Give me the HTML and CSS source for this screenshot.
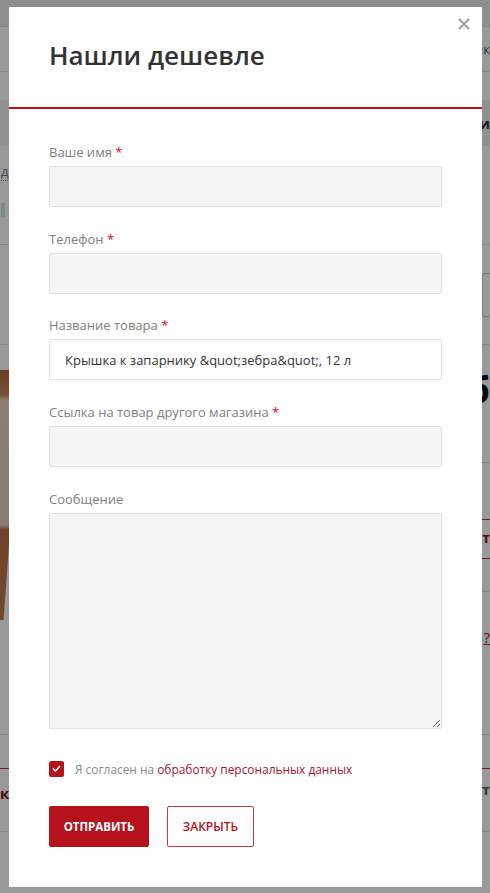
FILE: index.html
```html
<!DOCTYPE html>
<html lang="ru">
<head>
<meta charset="utf-8">
<title>Нашли дешевле</title>
<link rel="stylesheet" href="styles.css">
</head>
<body>
<div class="page">
  <div class="row r-top"></div>
  <div class="row r-nav"><span></span><span class="nav-txt">Банк</span></div>
  <div class="row r-gap"></div>
  <div class="row r-band"><span></span><span class="band-txt">Ви</span></div>
  <div class="row r-info">
    <div class="info-left"><span class="dotted">д</span><span class="teal"></span></div>
  </div>
  <div class="row r-box"><span></span><span class="peek-box"></span></div>
  <div class="row r-main">
    <div class="wood"></div>
    <div class="main-right">
      <div class="big">б</div>
      <div class="mr-line"></div>
      <div class="mr-red">т</div>
      <div class="mr-line2"></div>
      <div class="mr-q">?</div>
    </div>
  </div>
  <div class="row r-foot"><span class="foot-l">к</span><span class="foot-r">т</span></div>
  <div class="row r-last"></div>
</div>

<div class="overlay">
  <div class="modal">
    <button class="close" type="button" aria-label="Закрыть">
      <svg width="12" height="12" viewBox="0 0 12 12"><path d="M1 1 L11 11 M11 1 L1 11" stroke="#a3a3a3" stroke-width="2.4" stroke-linecap="butt"/></svg>
    </button>
    <div class="modal-head">
      <h2 class="title">Нашли дешевле</h2>
    </div>
    <form class="modal-body">
      <div class="field">
        <label class="label">Ваше имя <span class="req">*</span></label>
        <input class="input" type="text">
      </div>
      <div class="field">
        <label class="label">Телефон <span class="req">*</span></label>
        <input class="input" type="text">
      </div>
      <div class="field">
        <label class="label">Название товара <span class="req">*</span></label>
        <input class="input filled" type="text" value="Крышка к запарнику &amp;quot;зебра&amp;quot;, 12 л">
      </div>
      <div class="field">
        <label class="label">Ссылка на товар другого магазина <span class="req">*</span></label>
        <input class="input" type="text">
      </div>
      <div class="field field-msg">
        <label class="label">Сообщение</label>
        <textarea class="input textarea"></textarea>
      </div>
      <div class="agree">
        <span class="cb"><svg width="9" height="7" viewBox="0 0 9 7"><path d="M1 3.5 L3.5 6 L8 1" fill="none" stroke="#fff" stroke-width="1.6"/></svg></span>
        <span class="agree-txt">Я согласен на <a class="link" href="#">обработку персональных данных</a></span>
      </div>
      <div class="buttons">
        <button class="btn btn-primary" type="button">ОТПРАВИТЬ</button>
        <button class="btn btn-outline" type="button">ЗАКРЫТЬ</button>
      </div>
    </form>
  </div>
</div>
</body>
</html>
```

FILE: styles.css
```css
* { box-sizing: border-box; }
html, body { margin: 0; padding: 0; }
body {
  width: 490px;
  height: 893px;
  overflow: hidden;
  background: #fff;
  font-family: "Open Sans", "Liberation Sans", sans-serif;
}

/* background page (seen through the overlay) */
.page { width: 490px; }
.row { display: flex; justify-content: space-between; align-items: center; }
.r-top { height: 27px; background: #eee; border-bottom: 1px solid #dedede; }
.r-nav { height: 45px; border-bottom: 1px solid #dedede; }
.nav-txt { font-size: 13px; color: #555; }
.r-gap { height: 28px; }
.r-band { height: 46px; background: #f0f0f0; }
.band-txt { font-size: 15px; font-weight: 700; color: #333; }
.r-info { height: 99px; border-bottom: 1px solid #dedede; align-items: flex-start; }
.info-left { display: flex; flex-direction: column; align-items: flex-start; padding-left: 1px; padding-top: 16px; gap: 22px; }
.dotted { font-size: 13px; color: #6a7d96; border-bottom: 1px dotted #999; line-height: 18px; }
.teal { width: 4px; height: 14px; background: #cde7e6; }
.r-box { height: 100px; border-bottom: 1px solid #dedede; }
.peek-box { width: 8px; height: 44px; border: 1px solid #ccc; border-right: 0; border-radius: 3px 0 0 3px; }
.r-main { height: 390px; align-items: flex-start; border-bottom: 1px solid #dedede; }
.wood {
  margin-top: 25px; width: 9px; height: 250px;
  background: linear-gradient(180deg, #b06a40 0%, #c9875a 10%, #e8d6bc 12%, #ddd0ba 62%, #b97246 64%, #c07a4c 100%);
  clip-path: polygon(0 0, 100% 0, 100% 70%, 40% 100%, 0 100%);
}
.main-right { width: 8px; display: flex; flex-direction: column; align-items: flex-end; }
.big { margin-top: 25px; font-size: 36px; font-weight: 700; color: #111; line-height: 40px; }
.mr-line { margin-top: 52px; width: 8px; border-top: 1px solid #dedede; height: 58px; border-bottom: 1px solid #c4303a; }
.mr-red { font-size: 14px; font-weight: 700; color: #8b0f1a; line-height: 20px; margin-top: 8px; }
.mr-line2 { margin-top: 10px; width: 8px; border-top: 1px solid #c4303a; height: 34px; border-bottom: 1px solid #dedede; }
.mr-q { font-size: 15px; color: #a31b2a; text-decoration: underline; line-height: 20px; margin-top: 35px; }
.r-foot { height: 64px; border-bottom: 1px solid #dedede; border-top: 1px solid #c4303a; margin-top: 33px; align-items: flex-start; }
.foot-l { font-size: 15px; font-weight: 700; color: #7a0d18; margin-top: 14px; }
.foot-r { font-size: 15px; font-weight: 700; color: #555; margin-top: 10px; }
.r-last { height: 73px; border-bottom: 1px dotted #bbb; }

/* overlay + modal */
.overlay {
  position: fixed;
  inset: 0;
  background: rgba(0, 0, 0, 0.4);
}
.modal {
  position: absolute;
  left: 9px;
  top: 7px;
  width: 473px;
  height: 880px;
  background: #fff;
}
.close {
  position: absolute;
  top: 11px;
  right: 12px;
  width: 12px;
  height: 12px;
  padding: 0;
  border: 0;
  background: none;
  display: flex;
}
.modal-head {
  height: 102px;
  padding: 32px 40px 0;
  border-bottom: 2px solid #b5121b;
}
.title {
  margin: 0;
  font-size: 26px;
  line-height: 32px;
  font-weight: 600;
  color: #333;
}
.modal-body {
  padding: 34px 40px 40px;
  display: flex;
  flex-direction: column;
}
.field { display: flex; flex-direction: column; margin-bottom: 22.67px; }
.label {
  font-size: 13px;
  line-height: 19px;
  color: #808080;
  margin-bottom: 4px;
}
.req { color: #e3001b; }
.input {
  display: block;
  width: 393px;
  height: 41px;
  margin: 0;
  border: 1px solid #e2e2e2;
  border-radius: 2px;
  background: #f5f5f5;
  padding: 0 15px;
  font-family: "Open Sans", "Liberation Sans", sans-serif;
  font-size: 13px;
  color: #333;
  outline: none;
}
.input.filled { background: #fff; }
.field-msg { margin-bottom: 32px; }
.textarea { height: 216px; resize: vertical; padding: 10px 15px; }
.agree { display: flex; align-items: center; height: 16px; margin-bottom: 29px; }
.cb {
  width: 15px; height: 16px;
  background: #b5121b;
  border-radius: 2px;
  display: flex; align-items: center; justify-content: center;
  margin-right: 11px;
}
.agree-txt { font-size: 11.9px; color: #888; line-height: 16px; }
.link { color: #a3152a; text-decoration: none; }
.buttons { display: flex; gap: 18px; }
.btn {
  height: 41px;
  border-radius: 2px;
  font-family: "Open Sans", "Liberation Sans", sans-serif;
  font-size: 12px;
  cursor: pointer;
  padding: 0;
}
.btn-primary {
  width: 100px;
  background: #b5121b;
  border: 1px solid #b5121b;
  color: #fff;
  font-weight: 700;
  font-size: 11.5px;
}
.btn-outline {
  width: 87px;
  background: #fff;
  border: 1px solid #c23a40;
  color: #b5121b;
  font-weight: 600;
}
```
